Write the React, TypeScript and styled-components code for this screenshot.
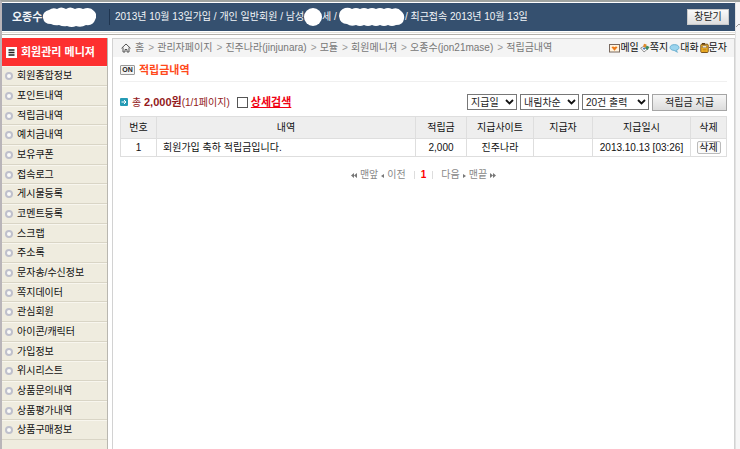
import React from "react";
import styled, { createGlobalStyle, css } from "styled-components";

const Global = createGlobalStyle`
  * { box-sizing: border-box; }
  body {
    margin: 0;
    background: #fff;
    color: #333;
    font-family: "Liberation Sans", "Noto Sans CJK KR", sans-serif;
    font-size: 10px;
    line-height: 14px;
  }
  a { color: inherit; text-decoration: none; }
  button, select, input { font: inherit; color: inherit; margin: 0; }
`;

const Page = styled.div`
  display: flex;
  min-height: 100vh;
  border-top: 2px solid #9fa3a0;
  border-left: 2px solid #b9b5b9;
`;

const Frame = styled.div`
  flex: 1;
  min-width: 0;
  display: flex;
  flex-direction: column;
`;

const Gutter = styled.div`
  width: 5px;
  padding-top: 16px;
  background: #f6f6f6;
  border-left: 1px solid #e2e2e2;
`;

const TopBar = styled.header`
  display: flex;
  align-items: center;
  height: 28px;
  margin-top: 1px;
  padding: 0 6px 0 10px;
  background: #35506f;
  color: #f2f5f8;
  white-space: nowrap;
`;

const Member = styled.strong`
  display: flex;
  align-items: center;
  width: 98px;
  height: 16px;
  border-right: 1px solid #1f3550;
  margin-right: 5px;
  font-size: 11px;
`;

const Facts = styled.div`
  display: flex;
  align-items: center;
  flex: 1;
  white-space: pre;
`;

const Rule = styled.div`
  height: 3px;
  margin: 1px 0 3px;
  border-top: 1px solid #e4e2dc;
  border-bottom: 1px solid #b5b2ac;
`;

const CloseButton = styled.button`
  width: 42px;
  height: 16px;
  padding: 0;
  line-height: 12px;
  border: 1px solid #c9c9c9;
  background: linear-gradient(#fafafa, #dedede);
  color: #222;
`;

const Columns = styled.div`
  flex: 1;
  display: flex;
  gap: 4px;
`;

const Sidebar = styled.nav`
  width: 106px;
  flex: none;
  background: #efecdf;
  border-right: 1px solid #b9b7b0;
`;

const SideTitle = styled.h1`
  display: flex;
  align-items: center;
  gap: 4px;
  height: 28px;
  margin: 0;
  padding-left: 4px;
  background: #fd3030;
  color: #fff;
  font-size: 11px;
  white-space: nowrap;
`;

const Menu = styled.ul`
  list-style: none;
  margin: 0;
  padding: 0;
`;

const MenuItem = styled.li`
  height: 20px;
  border-bottom: 1px solid #d9d5c6;
  border-top: 1px solid #f8f6ee;
  &:nth-child(3n) { height: 19px; }
`;

const MenuLink = styled.a`
  display: flex;
  align-items: center;
  gap: 4px;
  height: 100%;
  padding-left: 3px;
  color: #111;
  white-space: nowrap;
`;

const Bullet = styled.span`
  width: 8px;
  height: 8px;
  border: 2px solid #bfc0cc;
  border-radius: 50%;
  background: #fbfbf8;
`;

const Main = styled.main`
  flex: 1;
  min-width: 0;
  border: 1px solid #d2d2d2;
  border-bottom: 0;
`;

const Crumbs = styled.div`
  display: flex;
  align-items: center;
  height: 18px;
  padding: 0 7px 0 8px;
  background: #f4f4f4;
  color: #777;
  white-space: nowrap;
`;

const Trail = styled.nav`
  display: flex;
  align-items: center;
  flex: 1;
  gap: 4px;
`;

const Separator = styled.span`
  width: 5px;
  color: #999;
`;

const Tools = styled.div`
  display: flex;
  align-items: center;
  gap: 1px;
  color: #111;
`;

const Tool = styled.a`
  display: flex;
  align-items: center;
`;

const Content = styled.div`
  padding: 0 7px;
`;

const Heading = styled.div`
  display: flex;
  align-items: center;
  gap: 4px;
  height: 25px;
  padding-top: 1px;
  border-bottom: 1px solid #f0f0f0;
`;

const OnBadge = styled.span`
  width: 15px;
  height: 10px;
  border: 1px solid #999;
  border-radius: 1px;
  background: #f3f3f3;
  color: #222;
  font-size: 7px;
  font-weight: bold;
  line-height: 8px;
  text-align: center;
`;

const Title = styled.h2`
  margin: 0;
  font-size: 11px;
  color: #ff4a1c;
`;

const Controls = styled.div`
  display: flex;
  align-items: center;
  gap: 3px;
  height: 18px;
  margin: 11px 0 5px;
  white-space: nowrap;
`;

const Summary = styled.div`
  display: flex;
  align-items: center;
  gap: 4px;
  flex: 1;
  color: #93191b;
`;

const Total = styled.b`
  font-size: 11px;
`;

const Detail = styled.label`
  display: flex;
  align-items: center;
  gap: 3px;
  margin-left: 3px;
  color: #f00012;
  font-size: 11px;
  font-weight: bold;
  text-decoration: underline;
`;

const Check = styled.input`
  appearance: none;
  width: 11px;
  height: 11px;
  border: 1px solid #555;
  background: #fff;
`;

const SelectBox = styled.span<{ $w: number }>`
  display: grid;
  align-items: center;
  width: ${(p) => p.$w}px;
  height: 16px;
  > * { grid-area: 1 / 1; }
  > svg { justify-self: end; margin-right: 3px; pointer-events: none; z-index: 1; }
`;

const Select = styled.select`
  appearance: none;
  width: 100%;
  height: 16px;
  padding: 0 3px;
  line-height: 13px;
  border: 1px solid #777;
  border-radius: 0;
  background: #fff;
  color: #222;
`;

const GiveButton = styled.button`
  width: 75px;
  height: 17px;
  padding: 0;
  line-height: 13px;
  border: 1px solid #a5a5a5;
  background: linear-gradient(#f6f6f6, #dcdcdc);
  color: #222;
`;

const cell = css`
  border: 1px solid #dedede;
  padding: 0;
  text-align: center;
  font-weight: normal;
  color: #111;
  white-space: nowrap;
`;

const Table = styled.table`
  width: 100%;
  table-layout: fixed;
  border-collapse: collapse;
`;

const Th = styled.th<{ $w?: number }>`
  ${cell}
  height: 22px;
  width: ${(p) => (p.$w ? `${p.$w}px` : "auto")};
  background: #eee;
`;

const Td = styled.td<{ $left?: boolean }>`
  ${cell}
  height: 18px;
  ${(p) => p.$left && "text-align: left; padding-left: 6px;"}
`;

const DeleteButton = styled.button`
  display: block;
  width: 24px;
  height: 13px;
  margin: 0 auto;
  padding: 0;
  line-height: 11px;
  border: 1px solid #bbb;
  border-radius: 2px;
  background: #fafafa;
`;

const Pager = styled.nav`
  display: flex;
  justify-content: center;
  align-items: center;
  gap: 3px;
  margin-top: 11px;
  color: #888;
`;

const PageNumber = styled.strong`
  margin: 0 5px;
  padding: 0 6px;
  color: #f00;
  line-height: 8px;
  border: solid #ddd;
  border-width: 0 1px;
`;

const Mask = ({ w, d }: { w: number; d: string }) => (
  <svg width={w} height="20" viewBox={`0 0 ${w} 20`} fill="#fff" aria-hidden="true"><path d={d} /></svg>
);

const Home = () => (
  <svg width="10" height="10" viewBox="0 0 10 10" fill="none" stroke="#555" aria-hidden="true">
    <path d="M.5 5.3 5 1l4.500 4.300M2 4.500v4.500h2V6.500h2V9h2V4.500" />
  </svg>
);
const ListIcon = () => (
  <svg width="11" height="11" viewBox="0 0 11 11" aria-hidden="true">
    <path fill="#fff" d="M0 0h11v11H0z" /><path stroke="#222" strokeWidth="1.300" d="M2.500 3h6M2.500 5.500h6M2.500 8h6" />
  </svg>
);
const ArrowBox = () => (
  <svg width="8" height="8" viewBox="0 0 8 8" fill="none" aria-hidden="true">
    <rect width="8" height="8" rx="1" fill="#259bb5" /><path stroke="#fff" d="M1.500 4H6M4 2l2 2-2 2" />
  </svg>
);
const Chevron = () => (
  <svg width="9" height="6" viewBox="0 0 9 6" fill="none" stroke="#111" strokeWidth="1.800" aria-hidden="true"><path d="m1 1 3.500 3.500L8 1" /></svg>
);
const UpCaret = () => (
  <svg width="4" height="5" viewBox="0 0 4 5" fill="none" stroke="#999" aria-hidden="true"><path d="M0 4 3 1l2 2" /></svg>
);
const Mail = () => (
  <svg width="11" height="9" viewBox="0 0 11 9" aria-hidden="true">
    <rect x=".5" y=".5" width="10" height="7.500" fill="#fff3df" stroke="#79695f" /><path fill="#ee7a16" d="M2.500 3.200q1.500-1.600 3 0 1.500-1.600 3 0L5.500 6.800z" />
  </svg>
);
const Note = () => (
  <svg width="10" height="10" viewBox="0 0 10 10" aria-hidden="true">
    <path fill="#fff" stroke="#777" strokeWidth=".8" d="m.6 5 3-1.500L7.500 6 4 9z" />
    <path fill="#e08a2c" d="m4 .8 2.600.8-.8 3L3 3.800z" />
    <path fill="#3d8c64" d="m6.500 2.500 3 1.500-2 3-2.300-1.500z" />
    <path fill="#4b78b8" d="m3.500 4.500 2 .8-.8 1.500-2-.8z" />
  </svg>
);
const Chat = () => (
  <svg width="11" height="9" viewBox="0 0 10 9" aria-hidden="true">
    <path fill="#9bd4ee" stroke="#5ba6c9" strokeWidth=".8" d="M5 .6c2.600 0 4.500 1.200 4.500 2.900S7.800 6.200 6.500 6.300L8 8.300 4.600 6.400C2.200 6.300.5 5.200.5 3.500S2.400.6 5 .6z" />
  </svg>
);
const Phone = () => (
  <svg width="9" height="10" viewBox="0 0 9 10" aria-hidden="true">
    <rect x=".8" y="1.200" width="7.400" height="8.300" rx="1" fill="#f8b929" stroke="#6d4510" strokeWidth=".9" />
    <path fill="#5d3b12" d="M2 0h3v1.500H2z" />
    <path fill="#fff" stroke="#704b18" strokeWidth=".6" d="M2.300 2.800h4.400v2H2.300z" />
    <path stroke="#b97814" strokeWidth=".7" d="M2.500 6.500h4M2.500 8h4" />
  </svg>
);
const Arrows = ({ d, w }: { d: string; w: number }) => (
  <svg width={w} height="5" viewBox={`0 0 ${w} 5`} fill="#777" aria-hidden="true"><path d={d} /></svg>
);

const menu = ["회원종합정보", "포인트내역", "적립금내역", "예치금내역", "보유쿠폰", "접속로그", "게시물등록", "코멘트등록", "스크랩", "주소록", "문자송/수신정보", "쪽지데이터", "관심회원", "아이콘/캐릭터", "가입정보", "위시리스트", "상품문의내역", "상품평가내역", "상품구매정보"];
const trail = ["홈", "관리자페이지", "진주나라(jinjunara)", "모듈", "회원메니져", "오종수(jon21mase)", "적립금내역"];
const tools = [
  { label: "메일", icon: <Mail /> },
  { label: "쪽지", icon: <Note /> },
  { label: "대화", icon: <Chat /> },
  { label: "문자", icon: <Phone /> },
];
const selects = [
  { value: "지급일", label: "정렬 기준", w: 50 },
  { value: "내림차순", label: "정렬 순서", w: 59 },
  { value: "20건 출력", label: "출력 건수", w: 67 },
];

export default function App() {
  return (
    <>
      <Global />
      <Page>
        <Frame>
          <TopBar>
            <Member>
              오종수
              <Mask w={54} d="M7 3q4-3 8-1 4-3 9 0 4-3 9 0 4-2 8 0 7-3 11 2 4 4 1 9-2 6-9 5-5 3-10 1-4 2-9 0-4 1-8-1-4 1-8-1-7 0-8-6-1-6 6-8z" />
            </Member>
            <Facts>
              2013년 10월 13일가입 / 개인 일반회원 / 남성
              <Mask w={18} d="M9 1a9 9 0 1 1 0 18 9 9 0 0 1 0-18z" />
              세 / 
              <Mask w={68} d="M8 1q4-1 7 1 4-2 8 0 4-2 8 0 4-2 8 0 4-2 8 0 4-2 8 0 6-2 9 2 4 3 3 8-1 6-8 6-4 2-8 0-4 2-8 0-4 2-8 0-4 2-8 0-4 2-8 0-5 2-9-1-7 0-8-8 0-6 6-8z" />
              / 최근접속 2013년 10월 13일
            </Facts>
            <CloseButton type="button">창닫기</CloseButton>
          </TopBar>
          <Rule />
          <Columns>
            <Sidebar>
              <SideTitle><ListIcon />회원관리 메니져</SideTitle>
              <Menu>
                {menu.map((m) => (
                  <MenuItem key={m}><MenuLink href="#"><Bullet />{m}</MenuLink></MenuItem>
                ))}
              </Menu>
            </Sidebar>
            <Main>
              <Crumbs>
                <Trail>
                  <Home />
                  {trail.map((t, i) => (
                    <React.Fragment key={t}>
                      {i > 0 && <Separator>&gt;</Separator>}
                      <a href="#">{t}</a>
                    </React.Fragment>
                  ))}
                </Trail>
                <Tools>
                  {tools.map((t) => <Tool href="#" key={t.label}>{t.icon}{t.label}</Tool>)}
                </Tools>
              </Crumbs>
              <Content>
                <Heading><OnBadge>ON</OnBadge><Title>적립금내역</Title></Heading>
                <Controls>
                  <Summary>
                    <ArrowBox />
                    <span>총 <Total>2,000원</Total>(1/1페이지)</span>
                    <Detail><Check type="checkbox" />상세검색</Detail>
                  </Summary>
                  {selects.map((s) => (
                    <SelectBox key={s.value} $w={s.w}>
                      <Select aria-label={s.label}><option>{s.value}</option></Select>
                      <Chevron />
                    </SelectBox>
                  ))}
                  <GiveButton type="button">적립금 지급</GiveButton>
                </Controls>
                <Table>
                  <thead>
                    <tr>
                      <Th $w={36}>번호</Th><Th>내역</Th><Th $w={51}>적립금</Th><Th $w={67}>지급사이트</Th>
                      <Th $w={59}>지급자</Th><Th $w={98}>지급일시</Th><Th $w={36}>삭제</Th>
                    </tr>
                  </thead>
                  <tbody>
                    <tr>
                      <Td>1</Td><Td $left>회원가입 축하 적립금입니다.</Td><Td>2,000</Td><Td>진주나라</Td>
                      <Td /><Td>2013.10.13 [03:26]</Td><Td><DeleteButton type="button">삭제</DeleteButton></Td>
                    </tr>
                  </tbody>
                </Table>
                <Pager>
                  <Arrows w={6} d="M3 0v5L0 2.500zM6 0v5L3 2.500z" />
                  <a href="#">맨앞</a>
                  <Arrows w={3} d="M3 1v4L0 3z" />
                  <a href="#">이전</a>
                  <PageNumber>1</PageNumber>
                  <a href="#">다음</a>
                  <Arrows w={3} d="M0 1v4l3-2z" />
                  <a href="#">맨끝</a>
                  <Arrows w={6} d="M0 0v5l3-2.500zM3 0v5l3-2.500z" />
                </Pager>
              </Content>
            </Main>
          </Columns>
        </Frame>
        <Gutter><UpCaret /></Gutter>
      </Page>
    </>
  );
}
